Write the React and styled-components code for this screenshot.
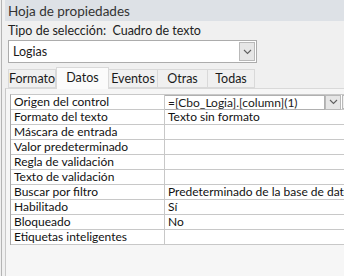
import React from "react";
import styled, { createGlobalStyle } from "styled-components";

const Global = createGlobalStyle`
  html, body { margin: 0; padding: 0; }
  body {
    width: 344px; height: 276px; overflow: hidden;
    background: #f0f0f0;
    font-family: Lato, "Noto Sans", sans-serif;
    color: #1a1a1a;
  }
`;

const Frame = styled.div`
  margin-left: 1px;
  border-left: 1px solid #b4b4b4;
  padding-left: 3px;
  height: 276px;
  box-sizing: border-box;
  display: flex;
  flex-direction: column;
`;

const TitleBar = styled.div`
  height: 21px;
  background: #dde1e6;
  display: flex;
  align-items: center;
  padding-left: 3px;
  font-size: 13.5px;
  color: #333;
`;

const SelectionLine = styled.div`
  height: 18px;
  display: flex;
  align-items: center;
  padding-left: 3px;
  font-size: 12.5px;
  color: #222;
  white-space: pre;
`;

const Combo = styled.div`
  margin: 1px 0 0 3px;
  width: 249px;
  height: 23px;
  box-sizing: border-box;
  border: 1px solid #acacac;
  background: #fff;
  display: flex;
  align-items: center;
  justify-content: space-between;
  padding-left: 4px;
  font-size: 12.5px;
`;

const DropButton = styled.div`
  width: ${(p) => p.$w}px;
  height: ${(p) => p.$h}px;
  box-sizing: border-box;
  margin-right: ${(p) => p.$mr || 0}px;
  border: 1px solid #b9b9b9;
  background: #e6e6e6;
  display: flex;
  align-items: center;
  justify-content: center;
  flex-shrink: 0;
`;

const Chevron = () => (
  <svg width="9" height="6" viewBox="0 0 9 6">
    <path d="M1 1 L4.5 4.5 L8 1" fill="none" stroke="#606060" strokeWidth="1.1" />
  </svg>
);

const TabStrip = styled.div`
  display: flex;
  align-items: flex-end;
  height: 21px;
  margin-top: 4px;
  padding-left: 3px;
  position: relative;
  z-index: 1;
`;

const Tab = styled.div`
  width: ${(p) => p.$w}px;
  box-sizing: border-box;
  height: ${(p) => (p.$active ? 22 : 19)}px;
  margin-bottom: ${(p) => (p.$active ? -1 : 0)}px;
  background: ${(p) => (p.$active ? "#fbfbfb" : "#f0f0f0")};
  border: 1px solid #d9d9d9;
  border-bottom: ${(p) => (p.$active ? "none" : "1px solid #d9d9d9")};
  border-left: ${(p) => (p.$first || p.$active ? "1px solid #d9d9d9" : "none")};
  ${(p) => p.$afterActive && "border-left: none;"}
  display: flex;
  align-items: ${(p) => (p.$active ? "flex-start" : "center")};
  padding-top: ${(p) => (p.$active ? 2 : 0)}px;
  justify-content: center;
  font-size: 12.5px;
  line-height: 15px;
  color: #1a1a1a;
`;

const Page = styled.div`
  flex: 1;
  border-left: 1px solid #c8c8c8;
  border-top: 1px solid #d9d9d9;
  background: #f6f6f6;
  padding: 5px 0 0 4px;
  overflow: hidden;
`;

const Grid = styled.div`
  display: grid;
  grid-template-columns: 154px 200px;
  border-left: 1px solid #a8a8a8;
  border-top: 1px solid #c8c8c8;
  width: 360px;
  background: #fff;
`;

const Cell = styled.div`
  height: 15px;
  box-sizing: border-box;
  border-bottom: 1px solid #c8c8c8;
  border-right: ${(p) => (p.$name ? "1px solid #c8c8c8" : "none")};
  padding-left: 3px;
  font-size: 12px;
  line-height: 14px;
  white-space: nowrap;
  color: #111;
`;

const EditCell = styled.div`
  height: 15px;
  box-sizing: border-box;
  border-bottom: 1px solid #c8c8c8;
  display: flex;
  align-items: center;
`;

const EditBox = styled.div`
  width: 160px;
  height: 15px;
  box-sizing: border-box;
  border: 1px solid #b0b0b0;
  border-left: none;
  padding-left: 3px;
  font-size: 12px;
  line-height: 13px;
  white-space: nowrap;
  flex-shrink: 0;
`;

const Builder = styled.div`
  width: 14px;
  height: 14px;
  box-sizing: border-box;
  margin-left: 1px;
  border: 1px solid #b9b9b9;
  background: #f0f0f0;
  flex-shrink: 0;
`;

const rows = [
  ["Formato del texto", "Texto sin formato"],
  ["Máscara de entrada", ""],
  ["Valor predeterminado", ""],
  ["Regla de validación", ""],
  ["Texto de validación", ""],
  ["Buscar por filtro", "Predeterminado de la base de datos"],
  ["Habilitado", "Sí"],
  ["Bloqueado", "No"],
  ["Etiquetas inteligentes", ""],
];

const tabs = [
  ["Formato", 48],
  ["Datos", 53],
  ["Eventos", 49],
  ["Otras", 50],
  ["Todas", 47],
];

export default function App() {
  return (
    <>
      <Global />
      <Frame>
        <TitleBar>Hoja de propiedades</TitleBar>
        <SelectionLine>{"Tipo de selección:  Cuadro de texto"}</SelectionLine>
        <Combo>
          <span>Logias</span>
          <DropButton $w={16} $h={19} $mr={1}>
            <Chevron />
          </DropButton>
        </Combo>
        <TabStrip>
          {tabs.map(([t, w], i) => (
            <Tab
              key={t}
              $w={w}
              $first={i === 0}
              $active={i === 1}
              $afterActive={i === 2}
            >
              {t}
            </Tab>
          ))}
        </TabStrip>
        <Page>
          <Grid>
            <Cell $name>Origen del control</Cell>
            <EditCell>
              <EditBox>=[Cbo_Logia].[column](1)</EditBox>
              <DropButton $w={16} $h={15}>
                <Chevron />
              </DropButton>
              <Builder />
            </EditCell>
            {rows.map(([n, v]) => (
              <React.Fragment key={n}>
                <Cell $name>{n}</Cell>
                <Cell>{v}</Cell>
              </React.Fragment>
            ))}
          </Grid>
        </Page>
      </Frame>
    </>
  );
}
